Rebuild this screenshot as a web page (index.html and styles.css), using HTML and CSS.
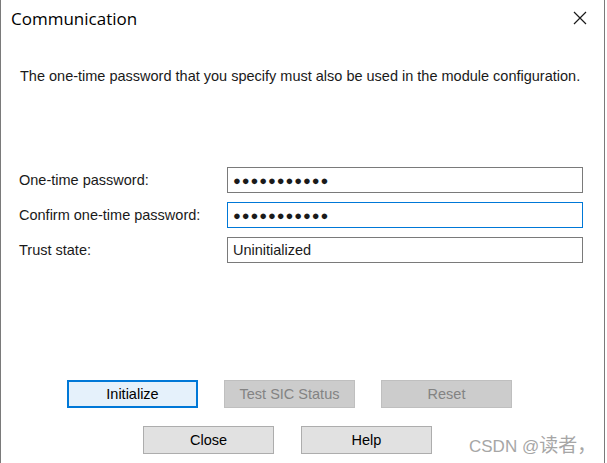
FILE: index.html
```html
<!DOCTYPE html>
<html>
<head>
<meta charset="utf-8">
<link rel="stylesheet" href="styles.css">
</head>
<body>
<div class="dialog">
  <div class="titlebar">
    <span class="title">Communication</span>
    <svg class="close" width="14" height="14" viewBox="0 0 14 14"><path d="M1 1 L13 13 M13 1 L1 13" stroke="#1a1a1a" stroke-width="1.2" fill="none"/></svg>
  </div>
  <p class="desc">The one-time password that you specify must also be used in the module configuration.</p>
  <div class="form">
    <label class="lbl">One-time password:</label>
    <div class="field"><span class="dots">●●●●●●●●●●●</span></div>
    <label class="lbl">Confirm one-time password:</label>
    <div class="field focus"><span class="dots">●●●●●●●●●●●</span></div>
    <label class="lbl">Trust state:</label>
    <div class="field"><span class="val">Uninitialized</span></div>
  </div>
  <div class="row row1">
    <div class="btn primary">Initialize</div>
    <div class="btn disabled">Test SIC Status</div>
    <div class="btn disabled">Reset</div>
  </div>
  <div class="row row2">
    <div class="btn">Close</div>
    <div class="btn">Help</div>
  </div>
  <div class="watermark">CSDN @<span class="cjk">读者，</span></div>
</div>
</body>
</html>
```

FILE: styles.css
```css
html, body {
  margin: 0;
  padding: 0;
  background: #ffffff;
}
.dialog {
  position: relative;
  width: 603px;
  height: 463px;
  border-left: 1px solid #7a7a7a;
  border-right: 1px solid #7a7a7a;
  font-family: "Liberation Sans", Arial, sans-serif;
  font-size: 14.5px;
  color: #1a1a1a;
  box-sizing: content-box;
}
.titlebar {
  display: flex;
  align-items: center;
  justify-content: space-between;
  height: 36px;
  padding: 0 17px 0 10px;
}
.title {
  font-family: "Open Sans", "Noto Sans", sans-serif;
  font-size: 17px;
  color: #000;
}
.close {
  display: block;
}
.desc {
  margin: 32px 0 0 19px;
  line-height: 16px;
  font-size: 14.5px;
  color: #1a1a1a;
}
.form {
  display: grid;
  grid-template-columns: 208px 356px;
  row-gap: 9px;
  margin: 83px 0 0 18px;
  align-items: center;
}
.lbl {
  font-size: 14.5px;
}
.field {
  box-sizing: border-box;
  height: 26px;
  border: 1px solid #7a7a7a;
  display: flex;
  align-items: center;
  padding-left: 5px;
}
.field.focus {
  border-color: #0078d7;
}
.dots {
  font-size: 13px;
  letter-spacing: 0.9px;
  color: #1a1a1a;
}
.val {
  font-size: 14.5px;
}
.row {
  display: flex;
  gap: 26px;
}
.row1 {
  margin: 117px 0 0 66px;
}
.row2 {
  gap: 27px;
  margin: 18px 0 0 142px;
}
.btn {
  box-sizing: border-box;
  width: 131px;
  height: 28px;
  border: 1px solid #adadad;
  background: #e1e1e1;
  display: flex;
  align-items: center;
  justify-content: center;
  font-size: 14.5px;
  color: #000;
}
.btn.primary {
  background: #e5f1fb;
  border: 2px solid #0078d7;
}
.btn.disabled {
  background: #cccccc;
  border-color: #bfbfbf;
  color: #838383;
}
.watermark {
  position: absolute;
  left: 468px;
  top: 430px;
  font-family: "Liberation Sans", "Noto Sans CJK SC", sans-serif;
  font-size: 17px;
  color: #a6a6a6;
  white-space: nowrap;
}
.cjk {
  font-family: "Noto Sans CJK SC", sans-serif;
  font-size: 19px;
}
```
